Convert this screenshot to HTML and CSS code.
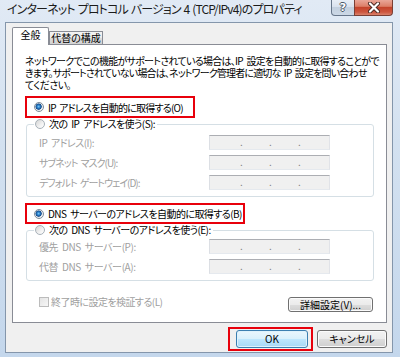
FILE: index.html
```html
<!DOCTYPE html>
<html lang="ja">
<head>
<meta charset="utf-8">
<title>インターネット プロトコル バージョン 4 (TCP/IPv4)のプロパティ</title>
<link rel="stylesheet" href="styles.css">
</head>
<body>
<div class="window">
  <div class="titlebar">
    <div class="title">インターネット プロトコル バージョン 4 (TCP/IPv4)のプロパティ</div>
    <div class="caption">
      <div class="cbtn help">?</div>
      <div class="cbtn close">
        <svg width="14" height="11" viewBox="0 0 14 11">
          <path d="M3 1.5 L11 9.5 M11 1.5 L3 9.5" stroke="#4a2a24" stroke-width="4" stroke-linecap="round"/>
          <path d="M3 1.5 L11 9.5 M11 1.5 L3 9.5" stroke="#ffffff" stroke-width="2.2" stroke-linecap="round"/>
        </svg>
      </div>
    </div>
  </div>
  <div class="client">
    <div class="tabs">
      <div class="tab active">全般</div>
      <div class="tab">代替の構成</div>
    </div>
    <div class="panel">
      <div class="desc">
        <span class="line l1">ネットワークでこの機能がサポートされている場合は、IP 設定を自動的に取得することがで</span>
        <span class="line l2">きます。サポートされていない場合は、ネットワーク管理者に適切な IP 設定を問い合わせ</span>
        <span class="line">てください。</span>
      </div>
      <div class="mark mark-ip">
        <span class="radio on"></span><span class="t-ip">IP アドレスを自動的に取得する(O)</span>
      </div>
      <fieldset class="group g1">
        <legend class="opt"><span class="radio"></span><span>次の IP アドレスを使う(S):</span></legend>
        <div class="row"><span class="lbl">IP アドレス(I):</span><span class="ipbox"><span>.</span><span>.</span><span>.</span></span></div>
        <div class="row"><span class="lbl kana">サブネット マスク(U):</span><span class="ipbox"><span>.</span><span>.</span><span>.</span></span></div>
        <div class="row"><span class="lbl kana">デフォルト ゲートウェイ(D):</span><span class="ipbox"><span>.</span><span>.</span><span>.</span></span></div>
      </fieldset>
      <div class="mark mark-dns">
        <span class="radio on"></span><span>DNS サーバーのアドレスを自動的に取得する(B)</span>
      </div>
      <fieldset class="group g2">
        <legend class="opt"><span class="radio"></span><span>次の DNS サーバーのアドレスを使う(E):</span></legend>
        <div class="row"><span class="lbl loose">優先 DNS サーバー(P):</span><span class="ipbox"><span>.</span><span>.</span><span>.</span></span></div>
        <div class="row"><span class="lbl loose">代替 DNS サーバー(A):</span><span class="ipbox"><span>.</span><span>.</span><span>.</span></span></div>
      </fieldset>
      <div class="foot">
        <div class="check"><span class="box"></span><span>終了時に設定を検証する(L)</span></div>
        <div class="btn adv">詳細設定(V)...</div>
      </div>
    </div>
    <div class="actions">
      <div class="mark mark-ok"><div class="btn default">OK</div></div>
      <div class="btn cancel">キャンセル</div>
    </div>
  </div>
</div>
</body>
</html>
```
FILE: styles.css
```css
* { box-sizing: border-box; }
html, body { margin: 0; padding: 0; }
body {
  font-family: "Noto Sans CJK JP", "Noto Sans", sans-serif;
  font-size: 10px;
  font-feature-settings: "palt";
  letter-spacing: -0.55px;
  word-spacing: 2px;
  color: #000;
  background: #fff;
}
.window {
  width: 400px;
  height: 357px;
  overflow: hidden;
  display: flex;
  flex-direction: column;
  padding: 0 7px 4px 5px;
  background: linear-gradient(#e1eaf5, #d3e1f0 40%, #c4d7ec);
}
.titlebar {
  height: 22px;
  flex: none;
  display: flex;
  justify-content: space-between;
  align-items: flex-start;
}
.title {
  padding-left: 2px;
  font-size: 12px;
  line-height: 18px;
  letter-spacing: -0.85px;
  word-spacing: 1px;
  color: #1b1b1b;
  white-space: nowrap;
}
.caption { display: flex; }
.cbtn {
  height: 16px;
  border: 1px solid #67768a;
  border-top: none;
  display: flex;
  align-items: center;
  justify-content: center;
  letter-spacing: 0;
}
.help {
  width: 24px;
  border-radius: 0 0 0 4px;
  background: linear-gradient(#e8eef6, #d9e2ee 45%, #c3d0df 50%, #ccd8e6);
  color: #fff;
  font-family: "DejaVu Sans", sans-serif;
  font-weight: bold;
  font-size: 11px;
  line-height: 14px;
  text-shadow: 1px 0 #4b5866, -1px 0 #4b5866, 0 1px #4b5866, 0 -1px #4b5866;
}
.close {
  width: 39px;
  margin-left: -1px;
  border-color: #7a3f35;
  border-radius: 0 0 4px 0;
  background: linear-gradient(#e9a698, #dc7f69 42%, #c4442c 50%, #cd563f 80%, #d9826c);
}
.close svg { display: block; }
.client {
  flex: 1;
  display: flex;
  flex-direction: column;
  border: 1px solid #8496ab;
  background: #f0f0f0;
  padding: 4px 5px 0 6px;
}
.tabs {
  display: flex;
  align-items: flex-end;
  height: 17px;
  position: relative;
  z-index: 1;
}
.tab {
  height: 13px;
  width: 54px;
  border: 1px solid #898c95;
  border-bottom: none;
  line-height: 12px;
  text-align: center;
  white-space: nowrap;
  letter-spacing: 0;
  background: linear-gradient(#f3f3f3, #ebebeb 50%, #dddddd 51%, #d2d2d2);
}
.tab.active {
  width: 37px;
  height: 18px;
  margin-bottom: -1px;
  padding-top: 1px;
  background: #fff;
  border-radius: 2px 2px 0 0;
}
.panel {
  height: 279px;
  flex: none;
  border: 1px solid #898c95;
  background: #fff;
  padding: 10px 12px;
  display: flex;
  flex-direction: column;
}
.desc {
  display: flex;
  flex-direction: column;
  white-space: nowrap;
}
.line {
  display: block;
  height: 12px;
  line-height: 12px;
}
.l1 { letter-spacing: -0.72px; }
.l2 { letter-spacing: -0.84px; }
.mark {
  border: 2px solid #e8000b;
  display: flex;
  align-items: center;
}
.mark-ip {
  margin-top: 5px;
  width: 170px;
  height: 22px;
  padding-left: 7px;
  white-space: nowrap;
}
.t-ip { letter-spacing: -0.78px; }
.mark-dns {
  margin-top: 6px;
  width: 220px;
  height: 21px;
  padding-left: 7px;
  white-space: nowrap;
}
.radio {
  width: 10px;
  height: 10px;
  flex: none;
  border-radius: 50%;
  border: 1px solid #a7b0b8;
  background: linear-gradient(135deg, #d3d3d3, #f2f2f2 60%, #ffffff);
  margin-right: 4px;
}
.radio.on {
  border-color: #7e8c99;
  background: radial-gradient(circle at 45% 45%, #79c6f5 0, #2f86cf 1.4px, #11498a 2.8px, #dfe4e9 3.4px, #f6f6f6 4.5px);
}
.group {
  margin: 0 0 0 1px;
  border: 1px solid #d5dfe5;
  border-radius: 3px;
  padding: 5px 7px 6px 7px;
  min-width: 0;
}
.g2 { padding-top: 3px; }
.opt {
  display: flex;
  align-items: center;
  height: 12px;
  line-height: 12px;
  padding: 0 2px 0 1px;
  white-space: nowrap;
}
.row {
  display: flex;
  align-items: center;
  height: 15px;
  padding-left: 5px;
  color: #a0a0a0;
  white-space: nowrap;
}
.row + .row { margin-top: 5px; }
.lbl { width: 170px; flex: none; }
.kana { letter-spacing: -1px; }
.loose { letter-spacing: -0.4px; }
.ipbox {
  width: 121px;
  height: 15px;
  display: flex;
  padding-left: 17px;
  border: 1px solid;
  border-color: #acaeb3 #e1e3e8 #e5e9ee #dcdfe4;
  background: #f0f0f0;
  color: #808080;
  line-height: 12px;
  letter-spacing: 0;
}
.ipbox span { width: 29px; text-align: center; }
.foot {
  margin-top: 15px;
  height: 16px;
  display: flex;
  align-items: flex-start;
}
.check {
  display: flex;
  align-items: center;
  height: 12px;
  line-height: 12px;
  padding-left: 14px;
  color: #a0a0a0;
  white-space: nowrap;
}
.box {
  width: 10px;
  height: 10px;
  margin-right: 2px;
  border: 1px solid #bcbcbc;
  background: linear-gradient(135deg, #e4e4e4, #f7f7f7);
}
.btn {
  display: flex;
  align-items: center;
  justify-content: center;
  border: 1px solid #707070;
  border-radius: 3px;
  background: linear-gradient(#f2f2f2, #ebebeb 50%, #dddddd 51%, #cfcfcf);
  box-shadow: inset 0 0 0 1px #fbfbfb;
  line-height: 12px;
  white-space: nowrap;
  letter-spacing: 0;
}
.adv {
  width: 85px;
  height: 15px;
  margin: 1px 1px 0 auto;
}
.actions {
  margin-top: 4px;
  display: flex;
  justify-content: flex-end;
  align-items: center;
}
.mark-ok {
  width: 85px;
  height: 24px;
  padding: 0 3px 0 6px;
}
.default {
  width: 72px;
  height: 18px;
  border-color: #3c7fb1;
  background: linear-gradient(#eaf6fd, #d9f0fc 50%, #bee6fd 51%, #a7d9f5);
  box-shadow: inset 0 0 0 1px #dff2fc;
}
.cancel {
  width: 70px;
  height: 18px;
  margin-left: 4px;
}
```
